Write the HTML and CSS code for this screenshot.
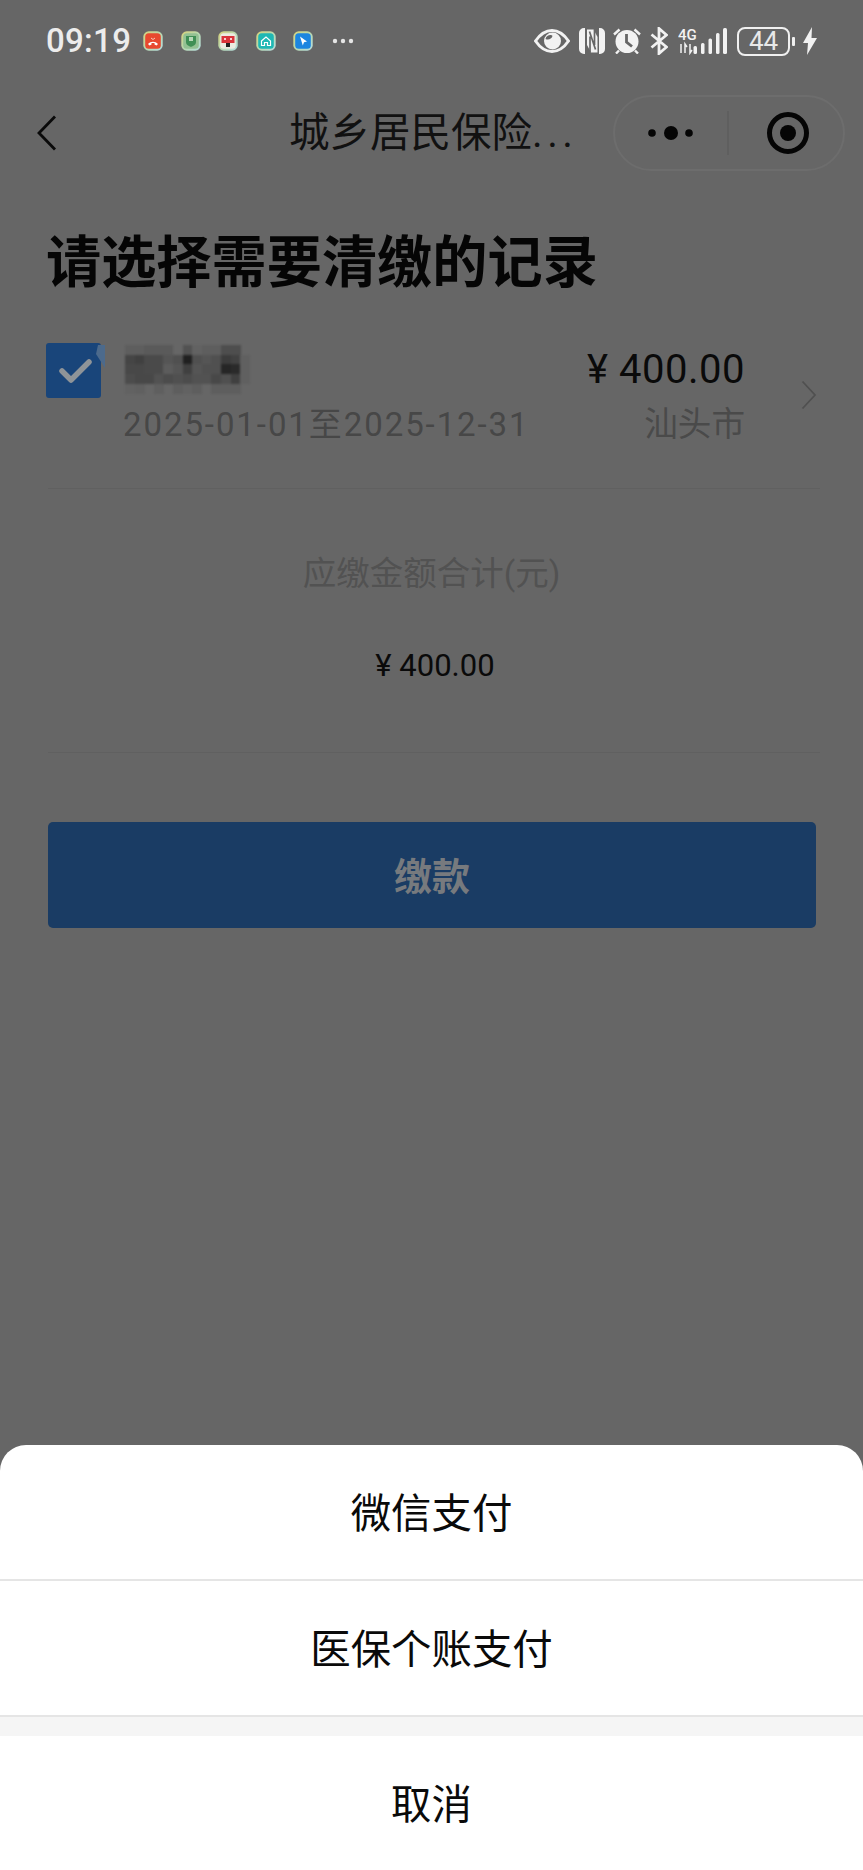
FILE: index.html
```html
<!DOCTYPE html>
<html lang="zh-CN">
<head>
<meta charset="utf-8">
<title>城乡居民保险</title>
<link rel="stylesheet" href="styles.css">
</head>
<body>
<div class="screen">
  <header class="status">
    <span class="time">09:19</span>
    <div class="apps">
      <svg class="app" viewBox="0 0 20 20"><defs><linearGradient id="frame" x1="0" y1="0" x2="1" y2="1"><stop offset="0" stop-color="#d8d27a"/><stop offset=".5" stop-color="#b8d8b0"/><stop offset="1" stop-color="#b5dde0"/></linearGradient></defs><rect x=".3" y=".3" width="19.400" height="19.400" rx="5.500" fill="url(#frame)"/><rect x="2.200" y="2.200" width="15.600" height="15.600" rx="3.500" fill="#e8492f"/><path d="M5 13c3-3 7-3 10 0l-1.500 1.500-2-1v-1.500h-3v1.500l-2 1z" fill="#fff"/><path d="M8 7l2 1.500 2-1.500" stroke="#f6c9bd" fill="none"/></svg>
      <svg class="app" viewBox="0 0 20 20"><rect x=".3" y=".3" width="19.400" height="19.400" rx="5.500" fill="url(#frame)"/><rect x="2.200" y="2.200" width="15.600" height="15.600" rx="3.500" fill="#93c193"/><path d="M5 5h10v6c0 3-3 4-5 5-2-1-5-2-5-5z" fill="#3f8f55"/><rect x="8" y="6" width="4" height="4" fill="#b7d8b7"/></svg>
      <svg class="app" viewBox="0 0 20 20"><rect x=".3" y=".3" width="19.400" height="19.400" rx="5.500" fill="url(#frame)"/><rect x="2.200" y="2.200" width="15.600" height="15.600" rx="3.500" fill="#eceae0"/><path d="M3.500 5h13v7h-13z" fill="#d9333a"/><rect x="8" y="12" width="4" height="4" fill="#222"/><path d="M6 8h2M12 8h2" stroke="#fff" stroke-width="1.500"/></svg>
      <svg class="app" viewBox="0 0 20 20"><rect x=".3" y=".3" width="19.400" height="19.400" rx="5.500" fill="url(#frame)"/><rect x="2.200" y="2.200" width="15.600" height="15.600" rx="3.500" fill="#1fb8b4"/><path d="M5.500 10l4.500-4 4.500 4v4.500h-3v-3h-3v3h-3z" fill="none" stroke="#fff" stroke-width="1.200"/></svg>
      <svg class="app" viewBox="0 0 20 20"><rect x=".3" y=".3" width="19.400" height="19.400" rx="5.500" fill="url(#frame)"/><rect x="2.200" y="2.200" width="15.600" height="15.600" rx="3.500" fill="#1c86e0"/><path d="M7 5.500l7 5-3 .8-1.200 3.200z" fill="#fff"/></svg>
      <svg class="more-dots" viewBox="0 0 22 6"><circle cx="3" cy="3" r="2.200"/><circle cx="11" cy="3" r="2.200"/><circle cx="19" cy="3" r="2.200"/></svg>
    </div>
    <div class="sys">
      <svg class="i-eye" viewBox="0 0 36 24"><path d="M1.500 12C7 4 13 1.500 18 1.500S29 4 34.500 12C29 20 23 22.500 18 22.500S7 20 1.500 12Z" fill="none" stroke="#f2f2f2" stroke-width="3"/><circle cx="18.500" cy="12" r="8.500" fill="#f2f2f2"/><path d="M11.500 10c3 1.500 6 0 7-3-1-1.500-6-1.500-7 3z" fill="#666"/></svg>
      <svg class="i-nfc" viewBox="0 0 26 26"><path d="M6 0v26H5a5 5 0 0 1-5-5V5a5 5 0 0 1 5-5zM20 0h1a5 5 0 0 1 5 5v16a5 5 0 0 1-5 5h-1z" fill="#f2f2f2"/><path d="M8 1.500h6.500L18.500 9v15.500h-6.500L8 17z" fill="#f2f2f2"/><path d="M11 24V8.500M15.500 2v15M10.500 3.500l6 18" stroke="#666" stroke-width="1.700" fill="none"/></svg>
      <svg class="i-alarm" viewBox="0 0 28 26"><circle cx="14" cy="13.500" r="11.500" fill="#f2f2f2"/><path d="M13.500 6v8l5.500 4.500" fill="none" stroke="#666" stroke-width="2.800"/><path d="M1 6.500L6.500 1.500M27 6.500L21.500 1.500M6 22.500l-3 3M22 22.500l3 3" stroke="#f2f2f2" stroke-width="2.400" fill="none"/></svg>
      <svg class="i-bt" viewBox="0 0 18 28"><path d="M1.500 7.500l15 12.500L9 26.500V1.500l7.500 6.500-15 12.500" fill="none" stroke="#f2f2f2" stroke-width="2.800"/></svg>
      <svg class="i-net" viewBox="0 0 50 28"><text class="net-label" x="0" y="13">4G</text><path d="M3 17v9M7 26v-9l2 3M12 17v9l2-3" stroke="#f2f2f2" stroke-width="1.500" fill="none"/><rect x="15.500" y="19" width="3.500" height="8" rx="1.500" fill="#f2f2f2"/><rect x="23" y="16" width="3.500" height="11" rx="1.500" fill="#f2f2f2"/><rect x="30.500" y="11.500" width="3.500" height="15.500" rx="1.500" fill="#f2f2f2"/><rect x="38" y="6" width="3.500" height="21" rx="1.500" fill="#f2f2f2"/><rect x="45" y="1" width="4" height="26" rx="1.500" fill="#f2f2f2"/></svg>
      <div class="battery"><span class="battery-body">44</span><i class="battery-nub"></i></div>
      <svg class="i-bolt" viewBox="0 0 14 28"><path d="M9 0L0 16h5L4 28l10-17H8.500z" fill="#f2f2f2"/></svg>
    </div>
  </header>

  <nav class="nav">
    <svg class="back" viewBox="0 0 20 36"><path d="M18 1.500L2 18l16 16.500" fill="none" stroke="#0a0a0a" stroke-width="2.800"/></svg>
    <div class="nav-title">城乡居民保险<span class="nav-dots">...</span></div>
    <div class="capsule">
      <svg class="capsule-more" viewBox="0 0 46 16"><circle cx="4" cy="8" r="3.800"/><circle cx="23" cy="8" r="7"/><circle cx="41" cy="8" r="3.800"/></svg>
      <i class="capsule-line"></i>
      <svg class="capsule-target" viewBox="0 0 44 44"><circle cx="22" cy="22" r="18.500" fill="none" stroke="#050505" stroke-width="5"/><circle cx="22" cy="22" r="8" fill="#050505"/></svg>
    </div>
  </nav>

  <main class="main">
    <h1 class="heading">请选择需要清缴的记录</h1>

    <section class="record">
      <svg class="check" viewBox="0 0 60 56"><rect x="0" y="0" width="55" height="55" rx="3" fill="#19457a"/><path d="M52 2h7v23l-9-14z" fill="#4c6a8c"/><path d="M16 28l9 9 18-18" fill="none" stroke="#8f9498" stroke-width="5.500" stroke-linecap="round" stroke-linejoin="round"/></svg>
      <div class="record-left">
        <svg class="mosaic" viewBox="0 0 125 50" role="img" aria-label="已打码姓名">
          <g>
            <rect x="0" y="0" width="10" height="10" fill="#5e5e5e"/><rect x="10" y="0" width="10" height="10" fill="#5e5e5e"/><rect x="19" y="0" width="10" height="10" fill="#5a5a5a"/><rect x="29" y="0" width="10" height="10" fill="#5a5a5a"/><rect x="38" y="0" width="10" height="10" fill="#5a5a5a"/><rect x="58" y="0" width="10" height="10" fill="#525252"/><rect x="67" y="0" width="10" height="10" fill="#626262"/><rect x="77" y="0" width="10" height="10" fill="#5e5e5e"/><rect x="86" y="0" width="10" height="10" fill="#5e5e5e"/><rect x="96" y="0" width="10" height="10" fill="#4e4e4e"/><rect x="106" y="0" width="10" height="10" fill="#4e4e4e"/>
            <rect x="0" y="10" width="10" height="10" fill="#454545"/><rect x="10" y="10" width="10" height="10" fill="#404040"/><rect x="19" y="10" width="10" height="10" fill="#4a4a4a"/><rect x="29" y="10" width="10" height="10" fill="#4a4a4a"/><rect x="38" y="10" width="10" height="10" fill="#555"/><rect x="48" y="10" width="10" height="10" fill="#505050"/><rect x="58" y="10" width="10" height="10" fill="#202020"/><rect x="67" y="10" width="10" height="10" fill="#505050"/><rect x="77" y="10" width="10" height="10" fill="#555"/><rect x="86" y="10" width="10" height="10" fill="#505050"/><rect x="96" y="10" width="10" height="10" fill="#3c3c3c"/><rect x="106" y="10" width="10" height="10" fill="#424242"/><rect x="115" y="10" width="10" height="10" fill="#606060"/>
            <rect x="0" y="19" width="10" height="10" fill="#484848"/><rect x="10" y="19" width="10" height="10" fill="#484848"/><rect x="19" y="19" width="10" height="10" fill="#4a4a4a"/><rect x="29" y="19" width="10" height="10" fill="#4a4a4a"/><rect x="38" y="19" width="10" height="10" fill="#5c5c5c"/><rect x="48" y="19" width="10" height="10" fill="#555"/><rect x="58" y="19" width="10" height="10" fill="#404040"/><rect x="67" y="19" width="10" height="10" fill="#555"/><rect x="77" y="19" width="10" height="10" fill="#505050"/><rect x="86" y="19" width="10" height="10" fill="#505050"/><rect x="96" y="19" width="10" height="10" fill="#262626"/><rect x="106" y="19" width="10" height="10" fill="#2a2a2a"/><rect x="115" y="19" width="10" height="10" fill="#606060"/>
            <rect x="0" y="29" width="10" height="10" fill="#4c4c4c"/><rect x="10" y="29" width="10" height="10" fill="#484848"/><rect x="19" y="29" width="10" height="10" fill="#484848"/><rect x="29" y="29" width="10" height="10" fill="#525252"/><rect x="38" y="29" width="10" height="10" fill="#4c4c4c"/><rect x="48" y="29" width="10" height="10" fill="#505050"/><rect x="58" y="29" width="10" height="10" fill="#4c4c4c"/><rect x="67" y="29" width="10" height="10" fill="#525252"/><rect x="77" y="29" width="10" height="10" fill="#525252"/><rect x="86" y="29" width="10" height="10" fill="#484848"/><rect x="96" y="29" width="10" height="10" fill="#505050"/><rect x="106" y="29" width="10" height="10" fill="#404040"/><rect x="115" y="29" width="10" height="10" fill="#606060"/>
            <rect x="0" y="39" width="10" height="10" fill="#626262"/><rect x="10" y="39" width="10" height="10" fill="#606060"/><rect x="29" y="39" width="10" height="10" fill="#5f5f5f"/><rect x="48" y="39" width="10" height="10" fill="#5e5e5e"/><rect x="58" y="39" width="10" height="10" fill="#626262"/><rect x="67" y="39" width="10" height="10" fill="#5e5e5e"/><rect x="86" y="39" width="10" height="10" fill="#5e5e5e"/><rect x="96" y="39" width="10" height="10" fill="#5e5e5e"/><rect x="106" y="39" width="10" height="10" fill="#5e5e5e"/>
          </g>
        </svg>
        <div class="date">2025-01-01至2025-12-31</div>
      </div>
      <div class="record-right">
        <div class="amount">¥ 400.00</div>
        <div class="city">汕头市</div>
      </div>
      <svg class="chevron" viewBox="0 0 16 30"><path d="M1.500 1.500L14 15 1.500 28.500" fill="none" stroke="#505050" stroke-width="1.800"/></svg>
    </section>

    <section class="total">
      <div class="total-label">应缴金额合计(元)</div>
      <div class="total-value">¥ 400.00</div>
    </section>

    <button class="pay">缴款</button>
  </main>

  <aside class="sheet">
    <div class="sheet-item">微信支付</div>
    <div class="sheet-item">医保个账支付</div>
    <div class="sheet-gap"></div>
    <div class="sheet-item sheet-cancel">取消</div>
  </aside>
</div>
</body>
</html>
```

FILE: styles.css
```css
* { box-sizing: border-box; }
html, body { margin: 0; padding: 0; }
body {
  font-family: Roboto, "Noto Sans CJK SC", "Noto Sans", sans-serif;
  background: #666;
}
.screen {
  width: 863px;
  height: 1870px;
  overflow: hidden;
  display: flex;
  flex-direction: column;
  background: #666;
  color: #0a0a0a;
}

/* status bar */
.status {
  height: 82px;
  padding: 0 46px 0 46px;
  display: flex;
  align-items: center;
  color: #f2f2f2;
}
.time {
  width: 97px;
  font-size: 33px;
  font-weight: 500;
  line-height: 84px;
  letter-spacing: 0.300px;
  color: #ececec;
}
.apps { display: flex; align-items: center; gap: 17.500px; }
.app { width: 20px; height: 20px; display: block; }
.more-dots { width: 22px; height: 6px; fill: #e6e6e6; margin-left: 1px; }
.sys { margin-left: auto; display: flex; align-items: center; }
.i-eye { width: 36px; height: 24px; margin-right: 9px; }
.i-nfc { width: 26px; height: 26px; margin-right: 8px; }
.i-alarm { width: 28px; height: 26px; margin-right: 9px; }
.i-bt { width: 18px; height: 28px; margin-right: 10px; }
.i-net { width: 50px; height: 28px; margin-right: 9px; }
.net-label { font-size: 15px; font-weight: 500; fill: #f2f2f2; }
.battery { display: flex; align-items: center; gap: 2px; margin-right: 8px; }
.battery-body {
  width: 53px;
  height: 29px;
  border: 2px solid #f0f0f0;
  border-radius: 8px;
  font-size: 26px;
  line-height: 25px;
  text-align: center;
  color: #e8e8e8;
}
.battery-nub { width: 3px; height: 9px; background: #f0f0f0; border-radius: 1px; }
.i-bolt { width: 14px; height: 28px; }

/* navigation */
.nav {
  height: 102px;
  padding: 0 18px 0 37px;
  display: flex;
  align-items: center;
  position: relative;
}
.back { width: 20px; height: 36px; }
.nav-title {
  position: absolute;
  left: 289px;
  top: 50%;
  transform: translateY(-50%);
  font-size: 40.500px;
  line-height: 50px;
  color: #111;
  white-space: nowrap;
}
.nav-dots { letter-spacing: 4.500px; }
.capsule {
  margin-left: auto;
  width: 232px;
  height: 76px;
  border: 2px solid #6d6d6d;
  border-radius: 38px;
  display: flex;
  align-items: center;
  padding-left: 33px;
}
.capsule-more { width: 46px; height: 16px; fill: #050505; }
.capsule-line { width: 2px; height: 44px; background: #5f5f5f; margin-left: 33px; }
.capsule-target { width: 44px; height: 44px; margin-left: 37px; }

/* main */
.main { padding: 0 48px; }
.heading {
  margin: 44px 0 0 -2px;
  font-size: 55.200px;
  line-height: 70px;
  font-weight: 700;
  color: #050505;
}
.record {
  margin-top: 45px;
  margin-right: -5px;
  height: 146px;
  display: flex;
  align-items: flex-start;
  position: relative;
}
.record::after {
  content: "";
  position: absolute;
  left: 0;
  right: 0;
  bottom: 0;
  height: 1px;
  background: #606060;
}
.check { width: 60px; height: 56px; margin: 0 0 0 -2px; flex: none; }
.record-left { margin-left: 19px; }
.mosaic { display: block; width: 125px; height: 50px; margin-top: 2px; filter: blur(1.200px); }
.date {
  margin: 8px 0 0 -2px;
  font-size: 33px;
  line-height: 44px;
  letter-spacing: 1.920px;
  color: #474747;
  white-space: nowrap;
}
.record-right { margin-left: auto; margin-right: 75px; text-align: right; }
.amount { margin-top: 3px; font-size: 40px; line-height: 48px; letter-spacing: 0.500px; color: #0a0a0a; }
.city { margin-top: 9px; font-size: 33.600px; line-height: 44px; color: #4a4a4a; }
.chevron {
  position: absolute;
  right: 3px;
  top: 37px;
  width: 16px;
  height: 30px;
}
.total {
  height: 264px;
  margin-right: -5px;
  border-bottom: 1px solid #606060;
  text-align: center;
  padding-top: 63px;
}
.total-label { font-size: 33.500px; line-height: 44px; color: #525252; margin-right: 5px; }
.total-value { margin: 50px 0 0 2px; font-size: 31px; line-height: 40px; color: #0a0a0a; }
.pay {
  display: block;
  width: 768px;
  height: 106px;
  margin-top: 69px;
  padding: 0 0 3px;
  border: 0;
  border-radius: 5px;
  background: #1a3c64;
  font-family: inherit;
  font-size: 38px;
  font-weight: 700;
  color: #777a7e;
}

/* action sheet */
.sheet {
  margin-top: auto;
  height: 425px;
  background: #fff;
  border-radius: 26px 26px 0 0;
  overflow: hidden;
  color: #0a0a0a;
}
.sheet-item {
  height: 136px;
  padding-bottom: 3px;
  border-bottom: 2px solid #e5e5e5;
  display: flex;
  align-items: center;
  justify-content: center;
  font-size: 40.400px;
}
.sheet-gap { height: 19px; background: #f5f5f5; }
.sheet-cancel { height: 134px; border-bottom: 0; }
```
